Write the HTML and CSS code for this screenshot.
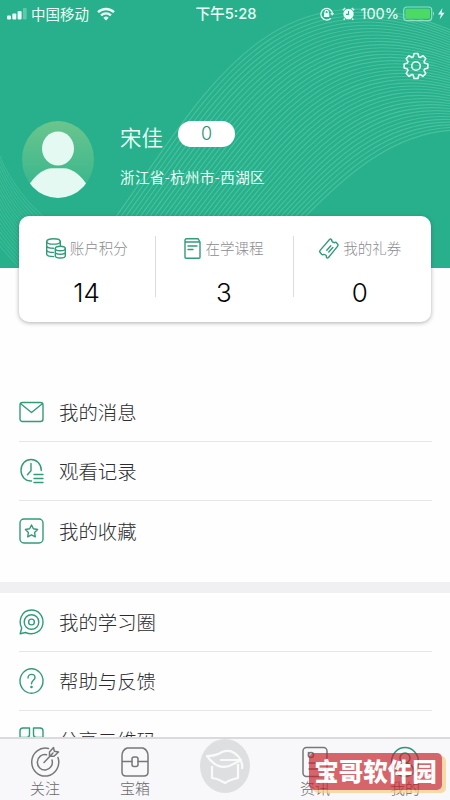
FILE: index.html
```html
<!DOCTYPE html>
<html lang="zh-CN">
<head>
<meta charset="utf-8">
<title>我的</title>
<link rel="stylesheet" href="styles.css">
</head>
<body>
<div class="app">
  <main class="content">
    <header class="hero">
      <svg class="waves" id="waves" viewBox="0 0 450 268" aria-hidden="true"></svg>
      <div class="status">
        <div class="status-left">
          <svg width="20" height="12" viewBox="0 0 20 12" fill="#e9fff7"><rect x="0" y="7.5" width="4" height="4" rx="1"/><rect x="5.3" y="5.5" width="4" height="6" rx="1"/><rect x="10.6" y="3" width="4" height="8.5" rx="1"/><rect x="15.9" y="0" width="3.8" height="11.5" rx="1" opacity=".3"/></svg>
          <span class="carrier">中国移动</span>
          <svg width="18" height="14" viewBox="0 0 18 14" fill="none" stroke="#e9fff7" stroke-width="2.4"><path d="M1 5.2a11.5 11.5 0 0 1 16 0M4.1 8.4a7 7 0 0 1 9.8 0"/><path d="M6.4 10.8a3.8 3.8 0 0 1 5.2 0L9 13.5z" fill="#e9fff7" stroke="none"/></svg>
        </div>
        <span class="time">下午5:28</span>
        <div class="status-right">
          <svg width="14" height="14" viewBox="0 0 14 14" fill="none" stroke="#e9fff7" stroke-width="1.2"><path d="M10.7 11.5A5.8 5.8 0 1 1 12.4 6"/><path d="M10.3 6h3.7l-1.7 2.8z" fill="#e9fff7" stroke="none"/><rect x="4" y="6" width="5.2" height="4" fill="#e9fff7" stroke="none"/><path d="M5 6V5a1.6 1.6 0 0 1 3.2 0v1"/></svg>
          <svg class="alarm" width="13" height="14" viewBox="0 0 13 14"><circle cx="6.5" cy="7" r="5.2" fill="#e9fff7"/><path d="M.8 3.3 3.2 1M12.2 3.3 9.8 1M2.7 11.5l-1 1.3M10.3 11.5l1 1.3" stroke="#e9fff7" stroke-width="1.4"/><path d="M6.5 4v3.4H4" fill="none" stroke="#27b08b" stroke-width="1.1"/></svg>
          <span class="percent">100%</span>
          <svg width="42" height="16" viewBox="0 0 42 16"><rect x=".7" y="1" width="28" height="13.6" rx="3" fill="none" stroke="#8fdfc6" stroke-width="1.2"/><rect x="2.4" y="2.8" width="24.6" height="10" rx="1.4" fill="#4cd964"/><path d="M30 5.5q2 2 0 4.500z" fill="#8fdfc6"/><path d="M39.500 2 35 8.600h3L36.600 13.500 41.500 6.800h-3z" fill="#e9fff7"/></svg>
        </div>
      </div>
      <svg class="gear" width="26" height="28" viewBox="-13 -14 26 28" fill="none" stroke="#e9fff7" stroke-width="1.6" stroke-linejoin="round"><path id="gear-path"/><circle r="4.300"/></svg>
      <div class="profile">
        <svg class="avatar" width="72" height="78" viewBox="0 0 72 78">
          <defs><linearGradient id="sky" x2="0" y2="1"><stop offset="0" stop-color="#6bc58d"/><stop offset="1" stop-color="#30b48d"/></linearGradient><clipPath id="disc"><ellipse cx="36" cy="38.500" rx="36" ry="38.500"/></clipPath></defs>
          <ellipse cx="36" cy="38.500" rx="36" ry="38.500" fill="url(#sky)"/>
          <g fill="#e5f9f3" clip-path="url(#disc)"><ellipse cx="36" cy="27.500" rx="16" ry="17"/><path d="M7.500 63Q15 52 24 48.500q3-1.200 6-1.200h12q3 0 6 1.200Q57 52 64.500 63Q54 77 36 78Q18 77 7.500 63z"/></g>
        </svg>
        <div class="who">
          <div class="name-line"><span class="name">宋佳</span><span class="pill">0</span></div>
          <div class="address">浙江省-杭州市-西湖区</div>
        </div>
      </div>
    </header>

    <section class="stats">
      <div class="stat">
        <div class="stat-label">
          <svg width="20" height="21" viewBox="0 0 20 21" class="line"><ellipse cx="7.500" cy="3.400" rx="6.800" ry="2.700"/><path d="M.7 3.400v12.500c0 1.500 3 2.700 7 2.700M14.300 3.400v4M.7 7.500c0 1.600 3 2.800 6.800 2.800M.7 11.700c0 1.600 3 2.700 6.800 2.700"/><ellipse cx="14.300" cy="10.500" rx="5" ry="2.200"/><path d="M9.300 10.500v7.300c0 3 10 3 10 0v-7.300M9.300 14.100c0 2.900 10 2.900 10 0"/></svg>
          <span>账户积分</span>
        </div>
        <div class="stat-value">14</div>
      </div>
      <div class="stat">
        <div class="stat-label">
          <svg width="17" height="21" viewBox="0 0 17 21" class="line"><path d="M2.500.7H14l2 3.300v15.200q0 1-1 1H2q-1 0-1-1V2.500Q1 .7 2.500.7zM1 4h15M4 8h9M4 11.500h5"/></svg>
          <span>在学课程</span>
        </div>
        <div class="stat-value">3</div>
      </div>
      <div class="stat">
        <div class="stat-label">
          <svg width="20" height="21" viewBox="0 0 20 21" class="line"><path d="M10.500 1.500q1-1 2 0 .1 3 3 3.200 1.300-.8 2 .1l1.300 1.600q.6 1-.3 2L9.500 19.500q-1 .9-2-.1.2-2.800-2.600-3-1.500.6-2.300-.1L1 14.300q-.6-.9.100-1.900zM7.800 12.300l4-4.500M9.800 14l4-4.500"/></svg>
          <span>我的礼券</span>
        </div>
        <div class="stat-value">0</div>
      </div>
    </section>

    <nav class="menu first">
      <a class="row"><svg width="25" height="26" viewBox="0 0 25 26" class="line"><rect x="1" y="3.500" width="23" height="19" rx="2.500"/><path d="m2 5 10.500 8.500L23 5"/></svg><span>我的消息</span></a>
      <a class="row"><svg width="25" height="26" viewBox="0 0 25 26" class="line"><path d="M12.500 23C6.500 23.500 2 18.500 2 12.300 2 6 6.500 1.500 12 1.500s10.300 4.500 10.300 11M12 5.500v7.300l-3.600 4M15 16.500h9M15 20.500h9M15 24.500h9"/></svg><span>观看记录</span></a>
      <a class="row"><svg width="25" height="26" viewBox="0 0 25 26" class="line"><rect x="1" y="1" width="23" height="24" rx="4"/><path d="m12.500 7 1.900 3.800 4.200.7-3 3 .7 4.300-3.800-2-3.800 2 .7-4.300-3-3 4.200-.7z"/></svg><span>我的收藏</span></a>
    </nav>
    <nav class="menu">
      <a class="row"><svg width="25" height="26" viewBox="0 0 25 26" class="line"><path d="M1.200 24.800 2.700 19C-.6 13 1.500 1 12.700 1 19 1 24 6.300 24 13c0 9.500-9.500 14-17.500 10.500z"/><circle cx="12.500" cy="13" r="7.300"/><circle cx="12.500" cy="13" r="2.900"/></svg><span>我的学习圈</span></a>
      <a class="row"><svg width="25" height="26" viewBox="0 0 25 26" class="line"><ellipse cx="12.500" cy="13" rx="11.500" ry="12.200"/><path d="M9 10c0-5 7-4.500 7-.5 0 2.700-3.500 3-3.500 6.200"/><circle cx="12.500" cy="19" r=".6"/></svg><span>帮助与反馈</span></a>
      <a class="row"><svg width="25" height="26" viewBox="0 0 25 26" class="line"><path d="M4 1h6.500v6.500q0 3-3 3H1V4q0-3 3-3zM14.500 1H21q3 0 3 3v6.500h-6.500q-3 0-3-3zM1 14.500h6.500q3 0 3 3V24H4q-3 0-3-3zM14.500 24v-9.500H24V21q0 3-3 3z"/></svg><span>分享二维码</span></a>
    </nav>
  </main>

  <footer class="tabs">
    <a class="tab"><svg width="30" height="32" viewBox="0 0 30 32" class="line"><path d="M18.500 2.500A13.500 14 0 1 0 28 11.500M16.500 8.800A7.500 7.700 0 1 0 22 14M14 16.500 23 7M19.500 10V6l4-4.500.8 3.700 4.200.8L24 10.300z"/></svg><span>关注</span></a>
    <a class="tab"><svg width="30" height="32" viewBox="0 0 30 32" class="line"><path d="M7 2h16q5 2 5 8v16q0 4-4 4H6q-4 0-4-4V10q0-6 5-8zM2 15.500h10M18 15.500h10"/><rect x="12" y="11" width="6" height="9.500" rx="2"/></svg><span>宝箱</span></a>
    <a class="tab center"><svg width="50" height="54" viewBox="0 0 50 54"><ellipse cx="25" cy="27" rx="25" ry="27" fill="#dedfe0"/><g fill="none" stroke="#fafafb" stroke-width="2.200" stroke-linejoin="round"><path d="M7 17q9 0 15-4 11-4.500 19 8-5 3-12 6-12 4-22-10zM20 21h20q3 3 2 9M12 27v12l5 1q5 2 8 4 4-3 13-5V25"/></g></svg></a>
    <a class="tab"><svg width="30" height="32" viewBox="0 0 30 32" class="line"><rect x="3" y="1.500" width="24" height="29" rx="3.500"/><circle cx="11" cy="9" r="2.500"/><path d="M8.500 6.500v4M9 17h14M9 23h14"/></svg><span>资讯</span></a>
    <a class="tab active"><svg width="30" height="32" viewBox="0 0 30 32" class="line"><ellipse cx="15" cy="16" rx="13.500" ry="14.500"/><circle cx="15" cy="12" r="5"/><path d="M6 26q1-9 9-9t9 9"/></svg><span>我的</span></a>
  </footer>
  <div class="stamp">宝哥软件园</div>
</div>
<script src="waves.js"></script>
</body>
</html>
```

FILE: styles.css
```css
* { box-sizing: border-box; }
body { margin: 0; font-family: "Noto Sans CJK SC", sans-serif; font-weight: 300; }
svg { display: block; flex: none; }
.app { position: relative; display: flex; flex-direction: column; width: 450px; height: 800px; overflow: hidden; background: #fefefe; }
.content { flex: 1; min-height: 0; overflow: hidden; }
.hero { position: relative; height: 268px; background: #27b08b; color: #e9fff7; }
.waves { position: absolute; inset: 0; width: 450px; height: 268px; fill: none; stroke: #5bcba9; stroke-width: 1.1; }
.status { position: relative; display: grid; grid-template-columns: 1fr auto 1fr; align-items: center; height: 27px; padding: 0 5px 0 7px; font-size: 14.500px; line-height: 20px; font-weight: 400; }
.status-left, .status-right { display: flex; align-items: center; }
.status-right { justify-content: flex-end; }
.carrier { margin: 0 8px 0 4px; }
.time { font-family: Inter, "Noto Sans CJK SC", sans-serif; font-size: 14.700px; font-weight: 500; }
.alarm { margin: 0 6px 0 8px; }
.percent { font-family: Inter, sans-serif; margin-right: 4px; }
.gear { position: relative; margin: 25px 21px 0 auto; }
.profile { position: relative; display: flex; padding: 41px 0 0 22px; }
.who { padding: 0 0 0 26px; font-weight: 400; }
.name-line { display: flex; align-items: center; height: 32px; }
.name { font-size: 21.500px; line-height: 32px; font-weight: 350; }
.pill { width: 57px; height: 26px; margin: -7px 0 0 15px; border-radius: 13px; background: #fff; color: #27937a; font-family: Inter, sans-serif; font-size: 18px; font-weight: 300; line-height: 26px; text-align: center; }
.address { margin-top: 13px; font-size: 14.500px; line-height: 22px; letter-spacing: .4px; white-space: nowrap; }
.stats { position: relative; display: grid; grid-template-columns: repeat(3, 1fr); align-items: start; width: 412px; height: 106px; margin: -52px 0 0 19px; padding-top: 20px; border-radius: 10px; background: #fff; box-shadow: 0 1px 4px rgba(60, 60, 70, .4); }
.stat { height: 61px; border-right: 1px solid transparent; }
.stat:not(:last-child) { border-right: 1px solid #dcdce0; }
.stat-label { display: flex; align-items: center; justify-content: center; gap: 4px; height: 24px; padding-right: 1px; color: #8c8c90; font-size: 14.500px; line-height: 24px; }
.stat:last-child .stat-label { padding-right: 3px; }
.stat-value { margin-top: 13px; padding-right: 1px; color: #050505; font-family: Inter, sans-serif; font-size: 26px; line-height: 39px; text-align: center; }
.stat:last-child .stat-value { padding-right: 4px; }
.line { fill: none; stroke: #329b79; stroke-width: 1.400; stroke-linecap: round; stroke-linejoin: round; }
.menu { border-top: 11px solid #f0eff2; }
.menu.first { height: 199px; margin-top: 61px; border: 0; }
.row { display: flex; align-items: center; gap: 15px; height: 59px; margin: 0 18px 0 19px; border-bottom: 1px solid #e6e6ea; color: #2c2c30; font-size: 19.400px; line-height: 30px; }
.menu.first .row:last-child { border-bottom: 0; }
.tabs { display: grid; grid-template-columns: repeat(5, 1fr); height: 63px; border-top: 2px solid #dadadd; background: #f8f8fa; }
.tab { display: flex; flex-direction: column; align-items: center; padding-top: 7px; color: #68686c; font-size: 15px; line-height: 20px; }
.tab span { margin-top: 0; }
.tab .line { stroke: #77777b; stroke-width: 1.500; }
.tab.active .line { stroke: #2d9678; }
.tab.center { padding-top: 0; }
.stamp { position: absolute; left: 309px; top: 753px; width: 133px; height: 37px; border-radius: 5px; background: rgba(198, 32, 42, .78); box-shadow: 4px 3px 0 rgba(250, 201, 126, .75); color: #fff; font-size: 24.500px; font-weight: 900; line-height: 36px; text-align: center; white-space: nowrap; opacity: .88; }
```

FILE: waves.js
```js
const waves = document.getElementById('waves');

function addCurve(points, opacity) {
  const path = document.createElementNS('http://www.w3.org/2000/svg', 'path');
  const p = points.map(n => n.toFixed(1));
  path.setAttribute('d', `M${p[0]} ${p[1]}C${p[2]} ${p[3]} ${p[4]} ${p[5]} ${p[6]} ${p[7]}`);
  path.setAttribute('opacity', opacity);
  waves.appendChild(path);
}

function blend(from, to, count, opacity) {
  for (let i = 0; i < count; i++) {
    const t = i / (count - 1);
    addCurve(from.map((n, k) => n + (to[k] - n) * t), opacity);
  }
}

blend([110, 225, 205, 95, 270, -50, 460, 34], [297, 225, 345, 175, 395, 130, 460, 130], 40, 0.65);
blend([-5, 144, 5, 172, 22, 200, 50, 222], [-5, 240, 3, 250, 12, 260, 20, 268], 20, 0.4);

const teeth = 8;
let outline = '';
for (let i = 0; i < teeth; i++) {
  [[-0.32, 9], [-0.16, 12], [0.16, 12], [0.32, 9]].forEach(([offset, radius]) => {
    const angle = i * 2 * Math.PI / teeth + offset;
    outline += `${outline ? 'L' : 'M'}${(radius * Math.sin(angle)).toFixed(2)} ${(-radius * 1.06 * Math.cos(angle)).toFixed(2)}`;
  });
}
document.getElementById('gear-path').setAttribute('d', outline + 'Z');
```
